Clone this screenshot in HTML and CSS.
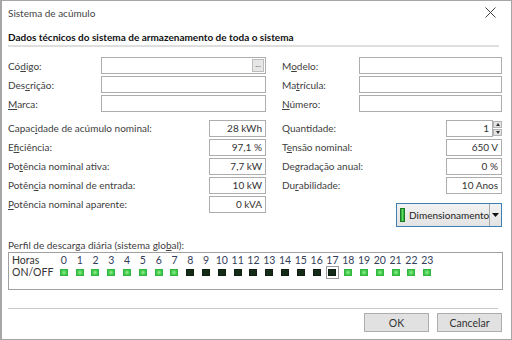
FILE: index.html
```html
<!DOCTYPE html>
<html>
	<head>
		<meta charset="UTF-8">
		<title>Sistema de acúmulo</title>
		<link rel="stylesheet" href="styles.css">
	</head>
	<body>
		<div class="window">
			<div class="titlebar">
				<span>Sistema de acúmulo</span>
				<svg class="close" width="11" height="11" viewBox="0 0 11 11"><path d="M0.5 0.5L10.5 10.5M10.5 0.5L0.5 10.5" stroke="#444" stroke-width="1"/></svg>
			</div>
			<div class="content">
				<div class="section-title">Dados técnicos do sistema de armazenamento de toda o sistema</div>

				<div class="grid-top">
					<label>Có<u>d</u>igo:</label>
					<div class="input with-btn"><span class="dots">...</span></div>
					<label class="right">M<u>o</u>delo:</label>
					<div class="input"></div>

					<label>Des<u>c</u>rição:</label>
					<div class="input"></div>
					<label class="right">Ma<u>t</u>rícula:</label>
					<div class="input"></div>

					<label><u>M</u>arca:</label>
					<div class="input"></div>
					<label class="right"><u>N</u>úmero:</label>
					<div class="input"></div>
				</div>

				<div class="grid-tech">
					<label>Capac<u>i</u>dade de acúmulo nominal:</label>
					<div class="input num">28 kWh</div>
					<label class="right">Quantidade:</label>
					<div class="spin">
						<div class="input num">1</div>
						<div class="spin-btns">
							<span class="up"></span>
							<span class="down"></span>
						</div>
					</div>

					<label>E<u>f</u>iciência:</label>
					<div class="input num">97,1 %</div>
					<label class="right">T<u>e</u>nsão nominal:</label>
					<div class="input num">650 V</div>

					<label>Po<u>t</u>ência nominal ativa:</label>
					<div class="input num">7,7 kW</div>
					<label class="right">Degradação anual:</label>
					<div class="input num">0 %</div>

					<label>Potên<u>c</u>ia nominal de entrada:</label>
					<div class="input num">10 kW</div>
					<label class="right">Du<u>r</u>abilidade:</label>
					<div class="input num">10 Anos</div>

					<label><u>P</u>otência nominal aparente:</label>
					<div class="input num">0 kVA</div>
					<div class="dim-cell">
						<div class="dim-btn">
							<span class="dim-main">
								<span class="battery"></span>
								Dimensionamento
							</span>
							<span class="dim-arrow">
								<svg width="7" height="4" viewBox="0 0 7 4"><path d="M0 0H7L3.5 4Z" fill="#111"/></svg>
							</span>
						</div>
					</div>
				</div>

				<div class="profile-label">Perfil de descarga diária (sistema glo<u>b</u>al):</div>
				<div class="profile">
					<div class="hours" id="hours"></div>
				</div>
			</div>

			<div class="footer">
				<div class="sep"></div>
				<div class="buttons">
					<button>OK</button>
					<button>Cancelar</button>
				</div>
			</div>
		</div>

		<script type="text/javascript">
			// horas ligadas/desligadas (8 a 17 desligado)
			var hours = document.getElementById('hours');
			var html = '<span class="h-label">Horas</span>';
			for (var i = 0; i < 24; i++) {
				html += '<span class="h-num">' + i + '</span>';
			}
			html += '<span class="h-label">ON/OFF</span>';
			for (var j = 0; j < 24; j++) {
				var off = (j >= 8 && j <= 17);
				var cls = off ? 'led off' : 'led on';
				var sel = (j == 17) ? ' sel' : '';
				html += '<span class="h-cell' + sel + '"><span class="' + cls + '"></span></span>';
			}
			hours.innerHTML = html;
		</script>
	</body>
</html>
```
FILE: styles.css
```css
*{
	margin: 0;
	padding: 0;
	box-sizing: border-box;
}
body{
	font-family: Lato, "Noto Sans", sans-serif;
	font-size: 10px;
	color: #404040;
	background: #fff;
}
u{
	text-decoration: underline;
	text-underline-offset: 1px;
}
.window{
	width: 512px;
	height: 340px;
	border: 1px solid #a6a6a6;
	border-left-width: 2px;
	display: flex;
	flex-direction: column;
	background: #fff;
}
.titlebar{
	height: 23px;
	display: flex;
	align-items: center;
	justify-content: space-between;
	padding: 0 15px 0 6px;
	color: #444;
}
.close{
	display: block;
}
.content{
	padding: 0 9px 0 6px;
}
.section-title{
	margin-top: 6px;
	line-height: 14px;
	padding-bottom: 1px;
	font-weight: bold;
	color: #111;
	border-bottom: 2px solid #dedede;
	margin-right: 3px;
}
.grid-top{
	margin-top: 10px;
	display: grid;
	grid-template-columns: 93px 165px 93px 143px;
	grid-auto-rows: 17px;
	row-gap: 2px;
	align-items: center;
}
.grid-tech{
	margin-top: 8px;
	display: grid;
	grid-template-columns: 201px 57px 180px 56px;
	grid-template-rows: repeat(4, 17px) auto;
	row-gap: 2px;
	align-items: start;
}
.grid-tech label{
	line-height: 17px;
}
label.right{
	padding-left: 16px;
}
.input{
	height: 17px;
	border: 1px solid #adadad;
	background: #fff;
	line-height: 15px;
	padding: 0 3px;
	color: #333;
	position: relative;
}
.input.num{
	text-align: right;
}
.with-btn .dots{
	position: absolute;
	right: 1px;
	top: 1px;
	width: 12px;
	height: 13px;
	background: #e6e6e6;
	border: 1px solid #bcbcbc;
	font-size: 8px;
	line-height: 9px;
	text-align: center;
	color: #555;
}
.spin{
	display: flex;
}
.spin .input{
	width: 47px;
}
.spin-btns{
	width: 9px;
	height: 17px;
	display: flex;
	flex-direction: column;
	justify-content: center;
	gap: 1px;
}
.spin-btns span{
	display: block;
	height: 7px;
	background: #e2e2e2;
	border: 1px solid #b4b4b4;
	position: relative;
}
.spin-btns .up::after,
.spin-btns .down::after{
	content: "";
	position: absolute;
	left: 1.5px;
	border-left: 2px solid transparent;
	border-right: 2px solid transparent;
}
.spin-btns .up::after{
	top: 1px;
	border-bottom: 3px solid #333;
}
.spin-btns .down::after{
	top: 1px;
	border-top: 3px solid #333;
}
.dim-cell{
	grid-column: 3 / 5;
	display: flex;
	justify-content: flex-end;
	margin-top: 7px;
}
.dim-btn{
	height: 24px;
	width: 106px;
	border: 1px solid #3d7fb5;
	background: linear-gradient(#f2f2f2, #e3e3e3);
	display: flex;
	align-items: stretch;
}
.dim-main{
	flex: 1;
	display: flex;
	align-items: center;
	gap: 4px;
	padding-left: 3px;
	color: #222;
}
.battery{
	width: 5px;
	height: 14px;
	background: linear-gradient(90deg, #1f9a2a, #5fe067 50%, #1f9a2a);
	border: 1px solid #1c7a23;
}
.dim-arrow{
	width: 12px;
	border-left: 1px solid #a9a9a9;
	display: flex;
	align-items: center;
	justify-content: center;
}
.profile-label{
	margin-top: 11px;
	line-height: 14px;
}
.profile{
	height: 38px;
	width: 495px;
	border: 1px solid #a0a0a0;
	padding: 1px 3px 0;
}
.hours{
	display: grid;
	grid-template-columns: 44px repeat(24, 15.8px);
	grid-template-rows: 12px 12px;
	align-items: center;
}
.h-label{
	color: #333;
	line-height: 11px;
	font-size: 10.5px;
}
.h-num{
	text-align: center;
	color: #34405a;
	line-height: 11px;
	font-size: 10.5px;
}
.h-cell{
	display: flex;
	justify-content: center;
	align-items: center;
	height: 12px;
}
.h-cell.sel{
	width: 13px;
	margin-left: 1px;
	height: 13px;
	border: 1px solid #9a9a9a;
}
.led{
	display: block;
	width: 8px;
	height: 7px;
}
.led.on{
	background: radial-gradient(circle, #8ff08f 0%, #3fc84a 70%);
	border: 1px solid #33b63d;
}
.led.off{
	background: #132b17;
	border: 1px solid #0d1d10;
}
.footer{
	margin-top: auto;
	padding: 0 9px 7px 6px;
}
.sep{
	height: 1px;
	background: #c8c8c8;
	margin-right: 4px;
}
.buttons{
	margin-top: 4px;
	display: flex;
	justify-content: flex-end;
	gap: 8px;
}
.buttons button{
	width: 65px;
	height: 19px;
	border: 1px solid #adadad;
	background: #e1e1e1;
	font-family: Lato, "Noto Sans", sans-serif;
	font-size: 10.5px;
	color: #333;
}
```
